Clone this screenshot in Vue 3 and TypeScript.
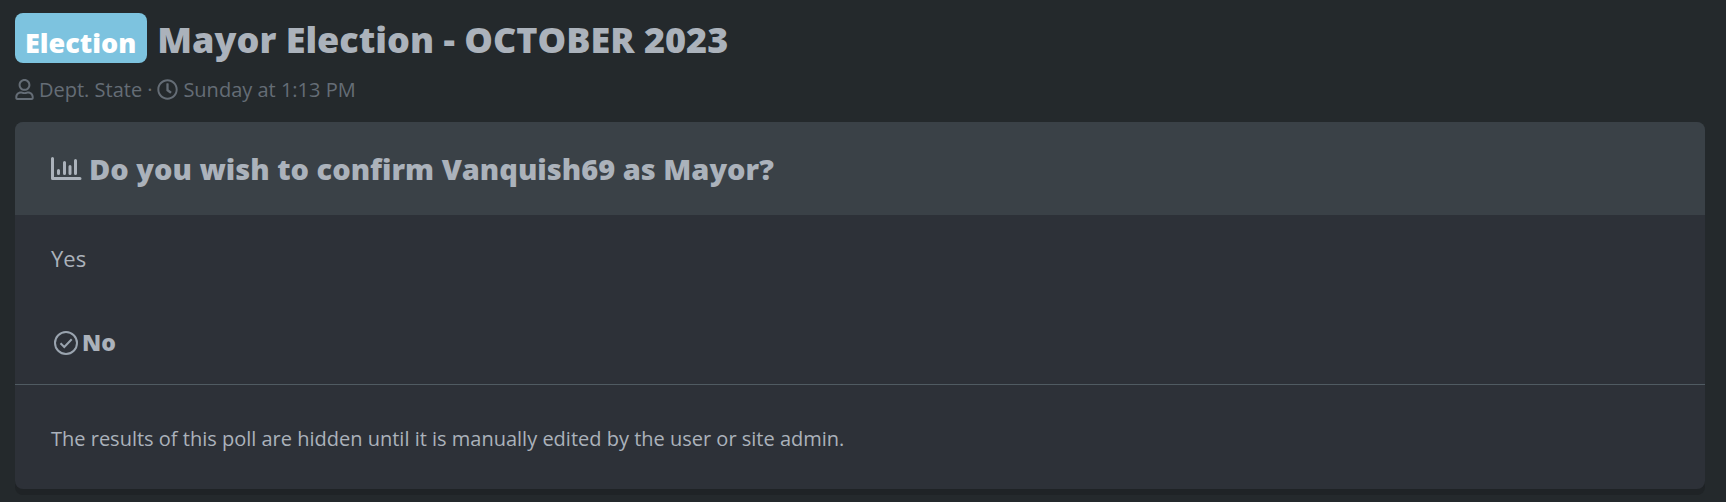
<script setup lang="ts">
interface PollOption {
  label: string
  chosen: boolean
}

const options: PollOption[] = [
  { label: 'Yes', chosen: false },
  { label: 'No', chosen: true },
]
</script>

<template>
  <main class="page">
    <header class="heading">
      <div class="title-row">
        <span class="badge">Election</span>
        <h1 class="title">Mayor Election - OCTOBER 2023</h1>
      </div>
      <div class="meta">
        <svg class="icon-user" viewBox="0 0 448 512" aria-hidden="true">
          <path d="M313.600 304c-28.700 0-42.500 16-89.600 16s-60.800-16-89.600-16C60.200 304 0 364.200 0 438.400V464c0 26.500 21.500 48 48 48h352c26.500 0 48-21.500 48-48v-25.600c0-74.200-60.200-134.400-134.400-134.400zM400 464H48v-25.600c0-47.600 38.800-86.400 86.400-86.400 14.600 0 38.300 16 89.600 16 51.700 0 74.900-16 89.600-16 47.600 0 86.400 38.800 86.400 86.400V464zM224 288c79.500 0 144-64.500 144-144S303.500 0 224 0 80 64.500 80 144s64.500 144 144 144zm0-240c52.900 0 96 43.100 96 96s-43.100 96-96 96-96-43.100-96-96 43.100-96 96-96z" />
        </svg>
        <a class="meta-link" href="#author">Dept. State</a>
        <span>·</span>
        <svg class="icon-clock" viewBox="0 0 512 512" aria-hidden="true">
          <path d="M256 8C119 8 8 119 8 256s111 248 248 248 248-111 248-248S393 8 256 8zm0 448c-110.500 0-200-89.500-200-200S145.500 56 256 56s200 89.500 200 200-89.500 200-200 200zm61.800-104.400l-84.900-61.700c-3.100-2.300-4.900-5.900-4.900-9.700V116c0-6.600 5.400-12 12-12h32c6.600 0 12 5.400 12 12v141.700l66.800 48.600c5.400 3.900 6.500 11.400 2.600 16.800L334.600 349c-3.900 5.300-11.400 6.500-16.800 2.600z" />
        </svg>
        <a class="meta-link" href="#posted"><time>Sunday at 1:13 PM</time></a>
      </div>
    </header>

    <section class="card" aria-labelledby="poll-title">
      <h2 id="poll-title" class="card-title">
        <svg class="icon-chart" viewBox="0 0 31 24" aria-hidden="true">
          <path class="axis" d="M1.500 1.500V21.500H29" />
          <path class="bars" d="M7.500 13.500V16.500M13.500 5.500V16.500M19 9.500V16.500M24.500 3.500V16.500" />
        </svg>
        <span>Do you wish to confirm Vanquish69 as Mayor?</span>
      </h2>
      <ul class="options">
        <li v-for="option in options" :key="option.label" class="option" :class="{ chosen: option.chosen }">
          <svg v-if="option.chosen" class="icon-check" viewBox="0 0 24 24" role="img" aria-label="Your vote">
            <circle cx="12" cy="12" r="11" />
            <path d="M6.500 12.200L10.300 16L17.700 8.300" />
          </svg>
          <span>{{ option.label }}</span>
        </li>
      </ul>
      <p class="note">The results of this poll are hidden until it is manually edited by the user or site admin.</p>
    </section>
  </main>
</template>

<style>
body {
  margin: 0;
  background: #24292c;
}
</style>

<style scoped>
.page {
  padding: 13px 21px 13px 15px;
  color: #abb2bb;
  font-family: 'Segoe UI', 'Open Sans', 'Noto Sans', sans-serif;
}

.title-row {
  display: flex;
  align-items: center;
  gap: 10px;
}

.badge {
  padding: 10px 11px 0 10px;
  border-radius: 8px;
  background: #7dc3df;
  color: #fff;
  font-size: 27px;
  font-weight: 800;
  line-height: 40px;
}

.title {
  margin: 0;
  padding-top: 4px;
  font-size: 36px;
  font-weight: 800;
  line-height: 46px;
}

.meta {
  display: flex;
  align-items: center;
  gap: 5px;
  margin: 12px 0 18px;
  color: #656d76;
  font-size: 20px;
  line-height: 29px;
}

.meta-link {
  color: inherit;
  text-decoration: none;
}

.icon-user,
.icon-clock {
  flex: none;
  height: 21px;
  fill: currentColor;
}

.icon-user {
  width: 19px;
}

.icon-clock {
  width: 21px;
}

.card {
  border-radius: 8px;
  background: #2d3138;
  box-shadow: 0 6px 0 #1f2326;
}

.card-title {
  display: flex;
  align-items: center;
  gap: 7px;
  margin: 0;
  padding: 27px 36px 26px;
  border-radius: 8px 8px 0 0;
  background: #3a4147;
  font-size: 29px;
  font-weight: 800;
  line-height: 40px;
}

.icon-chart {
  flex: none;
  width: 31px;
  height: 24px;
  fill: none;
  stroke: currentColor;
  stroke-linecap: round;
  stroke-linejoin: round;
}

.axis,
.bars {
  stroke-width: 3px;
}

.options {
  display: grid;
  gap: 1px;
  margin: 0;
  padding: 2px 0 0;
  border-bottom: 1px solid #505b62;
  list-style: none;
}

.option {
  display: flex;
  align-items: center;
  gap: 4px;
  padding: 25px 36px;
  font-size: 22px;
  line-height: 33px;
}

.option.chosen {
  padding-left: 39px;
  font-size: 23px;
  font-weight: 800;
}

.icon-check {
  flex: none;
  width: 24px;
  height: 24px;
  fill: none;
  stroke: #9aa4af;
  stroke-width: 2px;
}

.note {
  margin: 0;
  padding: 39px 36px 35px;
  font-size: 20px;
  line-height: 30px;
}
</style>
